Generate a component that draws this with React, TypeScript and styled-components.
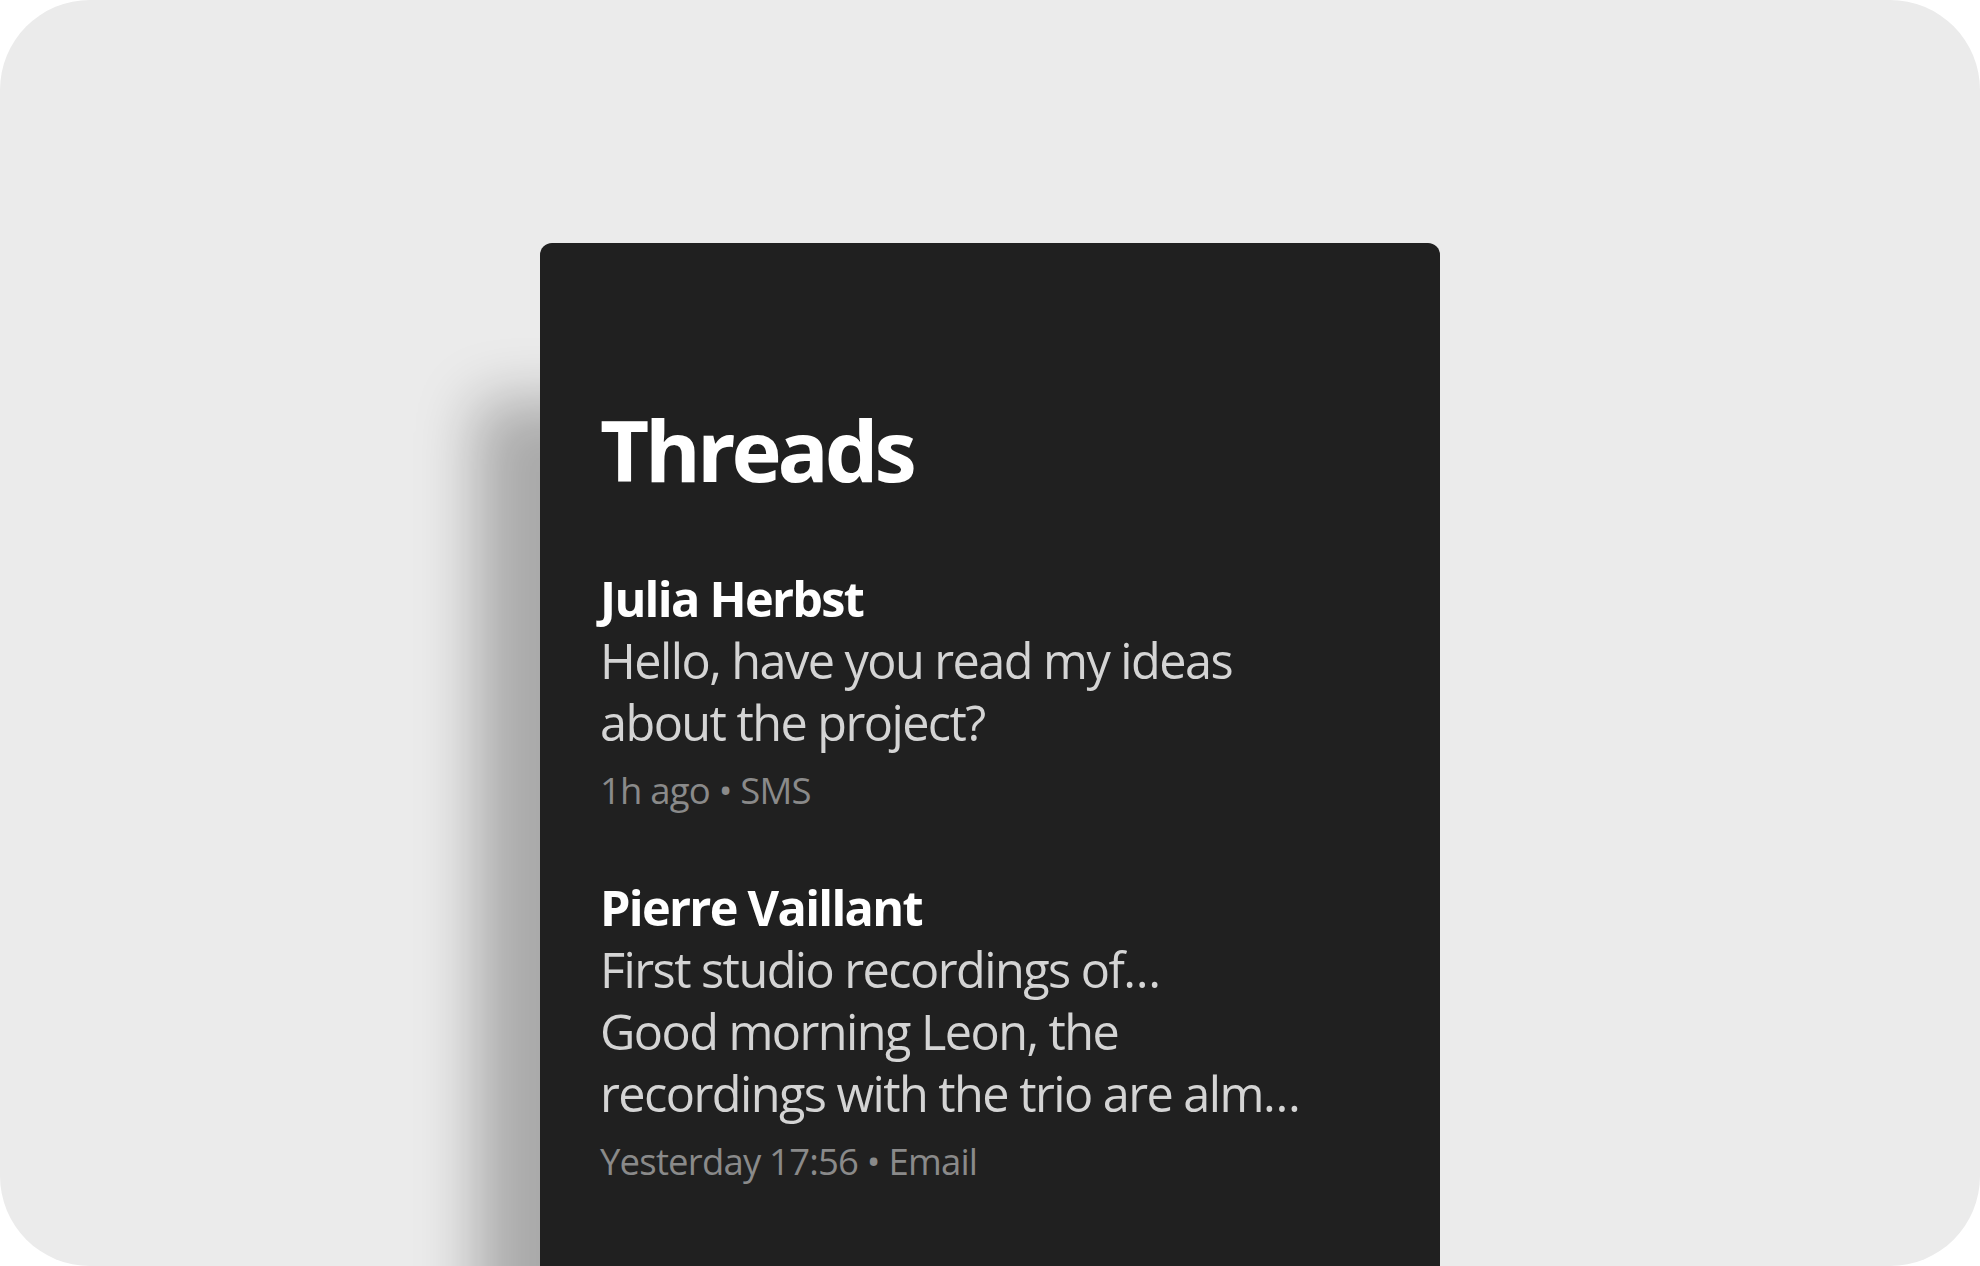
import styled, { createGlobalStyle } from 'styled-components';

const GlobalStyle = createGlobalStyle`
  html, body {
    margin: 0;
    padding: 0;
    background: #ffffff;
  }
  body {
    font-family: 'Open Sans', 'Noto Sans', sans-serif;
    -webkit-font-smoothing: antialiased;
  }
`;

const Stage = styled.main`
  width: 1980px;
  height: 1266px;
  background: #ebebeb;
  border-radius: 90px;
  overflow: hidden;
  display: flex;
  justify-content: center;
  align-items: flex-start;
  padding-top: 243px;
  box-sizing: border-box;
`;

const Panel = styled.section`
  width: 900px;
  min-height: 1100px;
  flex-shrink: 0;
  box-sizing: border-box;
  padding: 150px 60px 0;
  background: #202020;
  border-radius: 12px 12px 0 0;
  box-shadow: -64px 157px 60px rgba(0, 0, 0, 0.28);
`;

const Title = styled.h1`
  margin: 0 0 62px;
  font-size: 85px;
  line-height: 112px;
  font-weight: 700;
  color: #ffffff;
  letter-spacing: -4.1px;
`;

const ThreadList = styled.ul`
  list-style: none;
  margin: 0;
  padding: 0;
  display: flex;
  flex-direction: column;
  gap: 61px;
`;

const Thread = styled.li`
  display: flex;
  flex-direction: column;
  width: 730px;
`;

const Sender = styled.div`
  font-size: 48.6px;
  line-height: 62px;
  font-weight: 700;
  color: #ffffff;
  letter-spacing: -1.7px;
`;

const Line = styled.div`
  font-size: 48.6px;
  line-height: 62px;
  font-weight: 400;
  color: #d4d4d4;
  letter-spacing: -1.55px;
`;

const Meta = styled.div`
  margin-top: 12px;
  font-size: 36.5px;
  line-height: 50px;
  color: #8a8a8a;
  letter-spacing: -0.8px;
`;

type ThreadItem = {
  sender: string;
  subject?: string;
  preview: string;
  when: string;
  channel: string;
};

const threads: ThreadItem[] = [
  {
    sender: 'Julia Herbst',
    preview: 'Hello, have you read my ideas about the project?',
    when: '1h ago',
    channel: 'SMS',
  },
  {
    sender: 'Pierre Vaillant',
    subject: 'First studio recordings of…',
    preview: 'Good morning Leon, the recordings with the trio are alm…',
    when: 'Yesterday 17:56',
    channel: 'Email',
  },
];

export default function App() {
  return (
    <>
      <GlobalStyle />
      <Stage>
        <Panel>
          <Title>Threads</Title>
          <ThreadList>
            {threads.map((t) => (
              <Thread key={t.sender}>
                <Sender>{t.sender}</Sender>
                {t.subject && <Line>{t.subject}</Line>}
                <Line>{t.preview}</Line>
                <Meta>
                  {t.when} • {t.channel}
                </Meta>
              </Thread>
            ))}
          </ThreadList>
        </Panel>
      </Stage>
    </>
  );
}
